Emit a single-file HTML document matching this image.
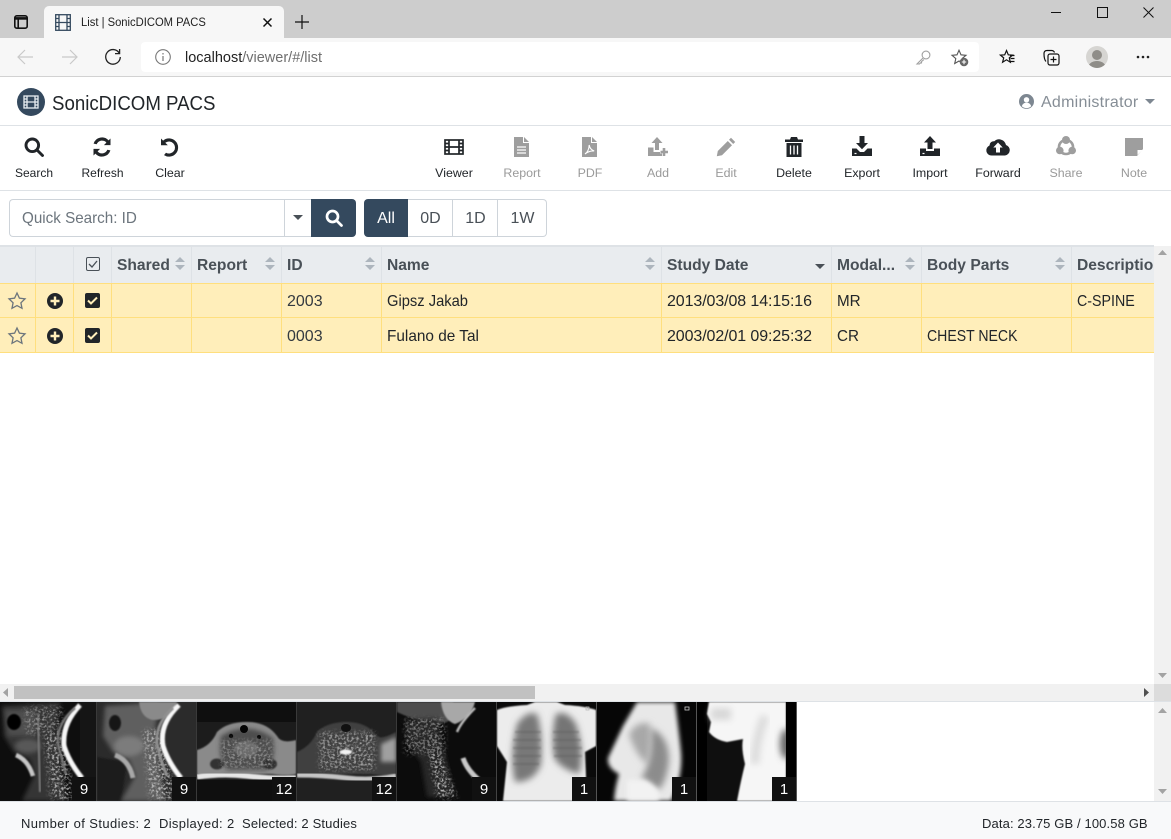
<!DOCTYPE html>
<html><head><meta charset="utf-8"><title>List | SonicDICOM PACS</title>
<style>
html,body{margin:0;padding:0;width:1171px;height:839px;overflow:hidden;background:#fff}
body{position:relative;font-family:"Liberation Sans",sans-serif;color:#212529}
.a{position:absolute}
.t{position:absolute;white-space:nowrap;line-height:1;transform-origin:0 0}
svg{position:absolute;overflow:visible}
.lb{position:absolute;top:166px;width:68px;text-align:center;font-size:12.4px;line-height:14px;color:#212529}
.dis{color:#9a9a9a}
.h{position:absolute;top:258px;font-size:15.6px;font-weight:bold;color:#495057;line-height:16px;white-space:nowrap}
.c{position:absolute;font-size:16px;line-height:16px;white-space:nowrap;color:#212529;transform-origin:0 0}
.v{position:absolute;width:1px;background:#dee2e6;top:247px;height:36px}
.w{position:absolute;width:1px;background:#ffdf7e;top:284px;height:68px}
.g{position:absolute;top:199px;height:36px;border:1px solid #ced4da;border-left:0;background:#fff;text-align:center;text-indent:1px;font-size:16px;line-height:38px;color:#495057}
.bd{position:absolute;top:777px;width:24px;height:24px;background:#111;color:#fff;font-size:15px;line-height:26px;text-align:center}
</style></head><body>

<!-- browser chrome -->
<div class="a" style="left:0;top:0;width:1171px;height:38px;background:#cdcdcd"></div>
<div class="a" style="left:44px;top:6px;width:240px;height:32px;background:#f7f7f7;border-radius:5px 5px 0 0"></div>
<div class="a" style="left:0;top:38px;width:1171px;height:38px;background:#f7f7f7"></div>
<div class="a" style="left:0;top:76px;width:1171px;height:1px;background:#d2d2d2"></div>
<div class="a" style="left:141px;top:42px;width:838px;height:30px;background:#fff;border-radius:4px"></div>

<svg style="left:14px;top:15px" width="14" height="14" fill="none" stroke="#111" stroke-width="1.6"><rect x=".8" y=".8" width="12.4" height="12.4" rx="2"/><path d="M.8 3.400h12.4" stroke-width="2.600"/><path d="M4.200 3v10"/></svg>
<svg style="left:55px;top:14px" width="16" height="17" fill="none" stroke="#34495e" stroke-width="1.3"><rect x=".7" y=".7" width="14.600" height="15.600"/><path d="M4 .7v15.600M12 .7v15.600M.7 4.500H4M.7 8.500H4M.7 12.500H4M12 4.500h3.300M12 8.500h3.300M12 12.500h3.300M4 8.500h8"/></svg>
<div class="t" style="left:81px;top:16px;font-size:12.200px;color:#222;transform:scaleX(.92)">List | SonicDICOM PACS</div>
<svg style="left:263px;top:18px" width="9" height="9" stroke="#111" stroke-width="1.500"><path d="M.5.500l8 8M8.500.500l-8 8"/></svg>
<svg style="left:295px;top:15px" width="14" height="14" stroke="#111" stroke-width="1.200"><path d="M7 0v14M0 7h14"/></svg>

<svg style="left:17px;top:49px" width="17" height="16" fill="none" stroke="#c9c9c9" stroke-width="1.200"><path d="M16 8H1M8 1L1 8l7 7"/></svg>
<svg style="left:61px;top:49px" width="17" height="16" fill="none" stroke="#c9c9c9" stroke-width="1.200"><path d="M1 8h15M9 1l7 7-7 7"/></svg>
<svg style="left:104px;top:48px" width="18" height="18" fill="none" stroke="#222" stroke-width="1.300"><path d="M15.200 5A7.300 7.300 0 1 0 16.300 9"/><path d="M15.600 1v4.600H11"/></svg>
<svg style="left:155px;top:49px" width="16" height="16" fill="none" stroke="#777" stroke-width="1.100"><circle cx="8" cy="8" r="7.300"/><path d="M8 7v5M8 4v1.500" stroke-width="1.200"/></svg>
<div class="t" style="left:185px;top:51px;font-size:14.500px;color:#6f6f6f"><span style="color:#222">localhost</span>/viewer/#/list</div>

<svg style="left:916px;top:50px" width="15" height="15" fill="none" stroke="#a0a0a0" stroke-width="1.100"><circle cx="10" cy="5" r="3.900"/><path d="M7 8L1 14h2.500l1-1.200 1 .1.100-1.400L8 9.500"/></svg>
<svg style="left:951px;top:49px" width="18" height="18"><path d="M8 1.200l2 4.600 5 .5-3.800 3.200 1.100 4.900L8 12l-4.300 2.500 1.100-4.900L1 6.300l5-.5z" fill="none" stroke="#555" stroke-width="1.100"/><circle cx="13" cy="13" r="4.300" fill="#666"/><path d="M13 10.800v4.400M10.800 13h4.400" stroke="#fff" stroke-width="1.100"/></svg>
<svg style="left:999px;top:49px" width="17" height="17" fill="none" stroke="#111" stroke-width="1.200"><path d="M7.500 1.500l1.800 4.300 4.200.3-3.200 2.800 1 4.300-3.800-2.400-3.900 2.400 1.100-4.300L1.400 6.100l4.300-.3z"/><path d="M11 6.500h4.500M11.500 9.500h4M11.500 12.500h4"/></svg>
<svg style="left:1043px;top:49px" width="17" height="17" fill="none" stroke="#111" stroke-width="1.200"><path d="M3 12.500C1.500 11 1 9 1 4.500 1 2.500 2 1.500 4 1.500h4.500c1.500 0 2.500.7 3 2"/><rect x="5" y="5" width="11" height="11" rx="2"/><path d="M10.500 7.500v6M7.500 10.500h6"/></svg>
<div class="a" style="left:1086px;top:46px;width:22px;height:22px;border-radius:50%;background:#d6d5d2;overflow:hidden"><div class="a" style="left:6px;top:4px;width:10px;height:10px;border-radius:50%;background:#8f8d88"></div><div class="a" style="left:2px;top:15px;width:18px;height:14px;border-radius:50%;background:#8f8d88"></div></div>
<svg style="left:1136px;top:55px" width="14" height="4" fill="#222"><circle cx="2" cy="2" r="1.300"/><circle cx="7" cy="2" r="1.300"/><circle cx="12" cy="2" r="1.300"/></svg>

<div class="a" style="left:1051px;top:12px;width:10px;height:1px;background:#111"></div>
<div class="a" style="left:1097px;top:7px;width:9px;height:9px;border:1px solid #111"></div>
<svg style="left:1143px;top:7px" width="11" height="11" stroke="#111" stroke-width="1"><path d="M.5.500l10 10M10.500.500l-10 10"/></svg>

<!-- app header -->
<svg style="left:17px;top:88px" width="28" height="28"><circle cx="14" cy="14" r="14" fill="#34495e"/><g fill="none" stroke="#e8edf2" stroke-width="1.300"><rect x="7" y="8" width="14" height="12"/><path d="M10 8v12M18 8v12M7 11h3M7 14h3M7 17h3M18 11h3M18 14h3M18 17h3M10 14h8"/></g></svg>
<div class="t" style="left:52px;top:94px;font-size:20.400px;color:#212529;transform:scaleX(.915)">SonicDICOM PACS</div>
<svg style="left:1019px;top:94px" width="15" height="15"><circle cx="7.500" cy="7.500" r="7.500" fill="#7d8791"/><circle cx="7.500" cy="5.800" r="2.700" fill="#fff"/><path d="M2.800 12.300c.8-2.600 2.600-3.500 4.700-3.500s3.900.9 4.700 3.500c-1.200 1.200-2.900 1.900-4.700 1.900s-3.500-.7-4.700-1.900z" fill="#fff"/></svg>
<div class="t" style="left:1041px;top:95px;font-size:16px;color:#868e96;letter-spacing:.25px">Administrator</div>
<svg style="left:1145px;top:99px" width="10" height="6" fill="#7d8791"><path d="M0 0h10L5 5z"/></svg>
<div class="a" style="left:0;top:125px;width:1171px;height:1px;background:#dee2e6"></div>

<!-- toolbar icons -->
<svg style="left:24px;top:137px" width="20" height="20" fill="none" stroke="#212529" stroke-width="2.900"><circle cx="8.300" cy="8.300" r="6.300"/><path d="M13 13l5.500 5.500" stroke-linecap="round"/></svg>
<svg style="left:92px;top:137px" width="20" height="20" fill="#212529"><path d="M18.500 1.500v6.600h-6.600l2.500-2.500A5.700 5.700 0 0 0 4.700 7.300L1.600 6.600A8.800 8.800 0 0 1 16.600 3.400z"/><path d="M1.500 18.500v-6.600h6.600l-2.500 2.500a5.700 5.700 0 0 0 9.700-1.700l3.100.7A8.800 8.800 0 0 1 3.400 16.600z"/></svg>
<svg style="left:160px;top:137px" width="20" height="20" fill="#212529"><path d="M1 1.500v6.800h6.800L5.300 5.800A6 6 0 1 1 6 15.700l-2 2.400A9.100 9.100 0 1 0 3.100 3.600z"/></svg>
<svg style="left:444px;top:139px" width="20" height="16" fill="none" stroke="#212529" stroke-width="1.700"><rect x="1" y="1" width="18" height="14"/><path d="M5 1v14M15 1v14M1 4.500h4M1 8h4M1 11.500h4M15 4.500h4M15 8h4M15 11.500h4M5 8h10"/></svg>
<svg style="left:514px;top:137px" width="15" height="20" fill="#9e9e9e"><path d="M0 0h9v6h6v14H0z"/><path d="M10 0l5 5h-5z"/><path d="M3 10h9M3 13h9M3 16h9" stroke="#fff" stroke-width="1.200"/></svg>
<svg style="left:582px;top:137px" width="15" height="20" fill="#9e9e9e"><path d="M0 0h9v6h6v14H0z"/><path d="M10 0l5 5h-5z"/><path d="M3 17c3-2 4-5 4.200-9 .5 3 2 5 5 6-3-.3-6 .5-9.200 3z" fill="none" stroke="#fff" stroke-width="1.100"/></svg>
<svg style="left:648px;top:137px" width="20" height="20" fill="#9e9e9e"><path d="M9 0l5.500 6h-3.500v7H7V6H3.500z"/><path d="M0 10.500h5.500V15H12v1.500H14V19H0z"/><path d="M16 11v8M12.500 15h7.500" stroke="#9e9e9e" stroke-width="2.600"/></svg>
<svg style="left:716px;top:137px" width="20" height="20" fill="#9e9e9e"><path d="M15 .8l4.200 4.200-2 2L13 2.800zM11.800 4l4.200 4.200L6 18.200l-5.200 1 1-5.200z"/></svg>
<svg style="left:785px;top:137px" width="18" height="20" fill="#212529"><path d="M6 0h6l1 2.500h5V5H0V2.500h5z"/><path d="M1.500 6h15v14h-15z"/><path d="M5.500 8.500v9M9 8.500v9M12.500 8.500v9" stroke="#fff" stroke-width="1.300"/></svg>
<svg style="left:852px;top:136px" width="20" height="20" fill="#212529"><path d="M7.500 0h5v7h3.500L10 13.300 4 7h3.500z"/><path d="M0 12.500h4.500L8 16h4l3.500-3.500H20V20H0z"/><path d="M2.500 17.500h2" stroke="#fff" stroke-width="1.200"/></svg>
<svg style="left:920px;top:136px" width="20" height="20" fill="#212529"><path d="M10 0l6 6.500h-3.500V13h-5V6.500H4z"/><path d="M0 12.500h6V15h8v-2.500h6V20H0z"/><path d="M2.500 17.500h2" stroke="#fff" stroke-width="1.200"/></svg>
<svg style="left:986px;top:137px" width="24" height="19" fill="#212529"><path d="M5.500 18.500A5.200 5.200 0 0 1 3.500 8.500 4.200 4.200 0 0 1 8.300 4.300 7 7 0 0 1 20 8a5.400 5.400 0 0 1-1 10.500z"/><path d="M12 5.500l4.700 5H14v5h-4v-5H7.300z" fill="#fff"/></svg>
<svg style="left:1056px;top:136px" width="20" height="20"><circle cx="10" cy="11" r="7" fill="none" stroke="#9e9e9e" stroke-width="2.600"/><g fill="#9e9e9e"><circle cx="10" cy="4" r="4"/><circle cx="3.800" cy="14.500" r="3.800"/><circle cx="16.200" cy="14.500" r="3.800"/></g></svg>
<svg style="left:1125px;top:138px" width="18" height="18" fill="#9e9e9e"><path d="M0 0h18v11l-6 7H0z"/><path d="M12.500 17v-5h5z" fill="#fff"/></svg>

<div class="lb" style="left:0;font-size:12px">Search</div>
<div class="lb" style="left:68.500px;font-size:12px">Refresh</div>
<div class="lb" style="left:136px">Clear</div>
<div class="lb" style="left:420px">Viewer</div>
<div class="lb dis" style="left:488px">Report</div>
<div class="lb dis" style="left:556px">PDF</div>
<div class="lb dis" style="left:624px">Add</div>
<div class="lb dis" style="left:692px">Edit</div>
<div class="lb" style="left:760px">Delete</div>
<div class="lb" style="left:828px">Export</div>
<div class="lb" style="left:896px">Import</div>
<div class="lb" style="left:964px">Forward</div>
<div class="lb dis" style="left:1032px">Share</div>
<div class="lb dis" style="left:1100px">Note</div>
<div class="a" style="left:0;top:190px;width:1171px;height:1px;background:#dee2e6"></div>

<!-- quick search -->
<div class="a" style="left:9px;top:199px;width:275px;height:36px;border:1px solid #ced4da;border-right:0;border-radius:4px 0 0 4px;background:#fff"></div>
<div class="t" style="left:22px;top:211px;font-size:16px;color:#6c757d;transform:scaleX(.95)">Quick Search: ID</div>
<div class="a" style="left:284px;top:199px;width:26px;height:36px;border:1px solid #ced4da;border-right:0;background:#fff"></div>
<svg style="left:293px;top:215px" width="10" height="5" fill="#495057"><path d="M0 0h10L5 5z"/></svg>
<div class="a" style="left:311px;top:199px;width:45px;height:38px;background:#34495e;border-radius:0 4px 4px 0"></div>
<svg style="left:325px;top:209px" width="18" height="18" fill="none" stroke="#fff" stroke-width="2.700"><circle cx="7.500" cy="7.500" r="5.500"/><path d="M11.800 11.800l4.700 4.700" stroke-linecap="round"/></svg>
<div class="a" style="left:364px;top:199px;width:44px;height:38px;background:#34495e;border-radius:4px 0 0 4px;color:#fff;text-align:center;font-size:16px;line-height:40px">All</div>
<div class="g" style="left:408px;width:44px">0D</div>
<div class="g" style="left:453px;width:44px">1D</div>
<div class="g" style="left:498px;width:48px;border-radius:0 4px 4px 0">1W</div>

<!-- table -->
<div class="a" style="left:0;top:245px;width:1154px;height:2px;background:#dee2e6"></div>
<div class="a" style="left:0;top:247px;width:1154px;height:36px;background:#e9ecef"></div>
<div class="a" style="left:0;top:283px;width:1154px;height:1px;background:#ffdf7e"></div>
<div class="a" style="left:0;top:284px;width:1154px;height:68px;background:#ffeeba"></div>
<div class="a" style="left:0;top:317px;width:1154px;height:1px;background:#ffdf7e"></div>
<div class="a" style="left:0;top:352px;width:1154px;height:1px;background:#ffdf7e"></div>

<div class="v" style="left:35px"></div><div class="v" style="left:73px"></div><div class="v" style="left:111px"></div><div class="v" style="left:191px"></div><div class="v" style="left:281px"></div><div class="v" style="left:381px"></div><div class="v" style="left:661px"></div><div class="v" style="left:831px"></div><div class="v" style="left:921px"></div><div class="v" style="left:1071px"></div>
<div class="w" style="left:35px"></div><div class="w" style="left:73px"></div><div class="w" style="left:111px"></div><div class="w" style="left:191px"></div><div class="w" style="left:281px"></div><div class="w" style="left:381px"></div><div class="w" style="left:661px"></div><div class="w" style="left:831px"></div><div class="w" style="left:921px"></div><div class="w" style="left:1071px"></div>

<svg style="left:86px;top:257px" width="14" height="14" fill="none" stroke="#495057" stroke-width="1"><rect x=".5" y=".5" width="13" height="13" rx="1.500"/><path d="M3 7l3 3 5-6" stroke-width="1.300"/></svg>
<div class="h" style="left:117px">Shared</div>
<div class="h" style="left:197px">Report</div>
<div class="h" style="left:287px">ID</div>
<div class="h" style="left:387px">Name</div>
<div class="h" style="left:667px">Study Date</div>
<div class="h" style="left:837px">Modal...</div>
<div class="h" style="left:927px">Body Parts</div>
<div class="h" style="left:1077px;width:77px;overflow:hidden">Description</div>

<svg style="left:175px;top:257px" width="10" height="13" fill="#adb5bd"><path d="M0 5L5 0l5 5zM0 8h10l-5 5z"/></svg>
<svg style="left:265px;top:257px" width="10" height="13" fill="#adb5bd"><path d="M0 5L5 0l5 5zM0 8h10l-5 5z"/></svg>
<svg style="left:365px;top:257px" width="10" height="13" fill="#adb5bd"><path d="M0 5L5 0l5 5zM0 8h10l-5 5z"/></svg>
<svg style="left:645px;top:257px" width="10" height="13" fill="#adb5bd"><path d="M0 5L5 0l5 5zM0 8h10l-5 5z"/></svg>
<svg style="left:815px;top:264px" width="10" height="5" fill="#495057"><path d="M0 0h10L5 5z"/></svg>
<svg style="left:905px;top:257px" width="10" height="13" fill="#adb5bd"><path d="M0 5L5 0l5 5zM0 8h10l-5 5z"/></svg>
<svg style="left:1055px;top:257px" width="10" height="13" fill="#adb5bd"><path d="M0 5L5 0l5 5zM0 8h10l-5 5z"/></svg>

<svg style="left:8px;top:292px" width="18" height="17" fill="none" stroke="#6c757d" stroke-width="1.300"><path d="M9 1l2.400 5.200 5.600.7-4.100 3.900 1.100 5.500L9 13.600l-5 2.700 1.100-5.500L1 6.900l5.600-.7z"/></svg>
<svg style="left:8px;top:327px" width="18" height="17" fill="none" stroke="#6c757d" stroke-width="1.300"><path d="M9 1l2.400 5.200 5.600.7-4.100 3.900 1.100 5.500L9 13.600l-5 2.700 1.100-5.500L1 6.900l5.600-.7z"/></svg>
<svg style="left:47px;top:293px" width="16" height="16"><circle cx="8" cy="8" r="8" fill="#212529"/><path d="M8 3.500v9M3.500 8h9" stroke="#ffeeba" stroke-width="2.400"/></svg>
<svg style="left:47px;top:328px" width="16" height="16"><circle cx="8" cy="8" r="8" fill="#212529"/><path d="M8 3.500v9M3.500 8h9" stroke="#ffeeba" stroke-width="2.400"/></svg>
<svg style="left:85px;top:293px" width="15" height="15"><rect width="15" height="15" rx="2" fill="#212529"/><path d="M3 7.500l3 3 6-6" fill="none" stroke="#ffeeba" stroke-width="2"/></svg>
<svg style="left:85px;top:328px" width="15" height="15"><rect width="15" height="15" rx="2" fill="#212529"/><path d="M3 7.500l3 3 6-6" fill="none" stroke="#ffeeba" stroke-width="2"/></svg>

<div class="c" style="left:287px;top:294px;color:#343a40">2003</div>
<div class="c" style="left:387px;top:294px;transform:scaleX(.92)">Gipsz Jakab</div>
<div class="c" style="left:667px;top:294px;letter-spacing:-.1px">2013/03/08 14:15:16</div>
<div class="c" style="left:837px;top:294px;transform:scaleX(.95)">MR</div>
<div class="c" style="left:1077px;top:294px;transform:scaleX(.89)">C-SPINE</div>
<div class="c" style="left:287px;top:329px;color:#343a40">0003</div>
<div class="c" style="left:387px;top:329px;transform:scaleX(.96)">Fulano de Tal</div>
<div class="c" style="left:667px;top:329px;letter-spacing:-.1px">2003/02/01 09:25:32</div>
<div class="c" style="left:837px;top:329px;transform:scaleX(.95)">CR</div>
<div class="c" style="left:927px;top:329px;transform:scaleX(.88)">CHEST NECK</div>

<!-- scrollbars -->
<div class="a" style="left:1154px;top:246px;width:17px;height:438px;background:#f1f1f1"></div>
<svg style="left:1158px;top:250px" width="9" height="5" fill="#a3a3a3"><path d="M0 5L4.500 0 9 5z"/></svg>
<svg style="left:1158px;top:673px" width="9" height="5" fill="#a3a3a3"><path d="M0 0l4.500 5L9 0z"/></svg>
<div class="a" style="left:0;top:684px;width:1154px;height:17px;background:#f1f1f1"></div>
<div class="a" style="left:1154px;top:684px;width:17px;height:17px;background:#dcdcdc"></div>
<div class="a" style="left:14px;top:686px;width:521px;height:13px;background:#c1c1c1"></div>
<svg style="left:3px;top:688px" width="5" height="9" fill="#a3a3a3"><path d="M5 0L0 4.500 5 9z"/></svg>
<svg style="left:1144px;top:688px" width="5" height="9" fill="#505050"><path d="M0 0l5 4.500L0 9z"/></svg>
<div class="a" style="left:0;top:701px;width:1171px;height:1px;background:#dee2e6"></div>
<div class="a" style="left:1154px;top:702px;width:17px;height:99px;background:#f1f1f1"></div>
<svg style="left:1158px;top:708px" width="9" height="5" fill="#a3a3a3"><path d="M0 5L4.500 0 9 5z"/></svg>
<svg style="left:1158px;top:789px" width="9" height="5" fill="#a3a3a3"><path d="M0 0l4.500 5L9 0z"/></svg>

<!-- thumbnails -->
<svg style="left:0;top:702px;overflow:hidden" width="797" height="99" viewBox="0 0 797 99">
<defs>
<filter id="b1" x="-30%" y="-30%" width="160%" height="160%"><feGaussianBlur stdDeviation=".7"/></filter>
<filter id="b2" x="-30%" y="-30%" width="160%" height="160%"><feGaussianBlur stdDeviation="2"/></filter>
<filter id="b4" x="-50%" y="-50%" width="200%" height="200%"><feGaussianBlur stdDeviation="3.500"/></filter>
<filter id="n" x="-20%" y="-20%" width="140%" height="140%"><feGaussianBlur in="SourceGraphic" stdDeviation="2.500" result="soft"/><feTurbulence type="fractalNoise" baseFrequency=".42" numOctaves="2" seed="11" result="tb"/><feColorMatrix in="tb" values="0 0 0 0 1 0 0 0 0 1 0 0 0 0 1 3.500 0 0 0 -1.550" result="al"/><feComposite in="soft" in2="al" operator="in"/></filter>
<clipPath id="c1"><rect width="96" height="99"/></clipPath>
<clipPath id="c2"><rect width="99" height="99"/></clipPath>
</defs>
<rect width="797" height="99" fill="#555"/>

<!-- T1 -->
<g clip-path="url(#c1)"><rect width="96" height="99" fill="#0e0e0e"/><rect x="80" width="16" height="99" fill="#151515"/>
<path d="M2 4L60 0 56 30 66 99H22L34 74 30 58 14 50 4 34z" fill="#353535" filter="url(#b2)"/>
<path d="M5 8H36V34H8z" fill="#4e4e4e" filter="url(#b2)"/>
<ellipse cx="14" cy="20" rx="7" ry="8" fill="#060606" filter="url(#b1)"/><ellipse cx="28" cy="44" rx="13" ry="7" fill="#585858" filter="url(#b2)"/>
<path d="M16 53Q28 58 33 74" fill="none" stroke="#c6c6c6" stroke-width="4.500" filter="url(#b1)"/>
<path d="M38 14L40 90" stroke="#7a7a7a" stroke-width="2" filter="url(#b1)"/>
<path d="M44 30L50 96 72 99V80L60 28z" fill="#a8a8a8" filter="url(#n)"/>
<path d="M24 5H62V22L45 32H26z" fill="#8a8a8a" filter="url(#n)"/>
<path d="M80 3Q62 22 64 44 69 60 82 76" fill="none" stroke="#f6f6f6" stroke-width="5" filter="url(#b1)"/>
<path d="M75 6Q56 22 58 42 62 58 66 72" fill="none" stroke="#777" stroke-width="2.500" filter="url(#b1)"/>
</g>
<!-- T2 -->
<g transform="translate(97)" clip-path="url(#c2)"><rect width="99" height="99" fill="#2b2b2b"/><path d="M0 55L30 60 24 99H0z" fill="#1a1a1a" filter="url(#b1)"/>
<path d="M8 4L62 0 58 30 68 99H24L38 74 32 58 16 50 6 34z" fill="#5e5e5e" filter="url(#b2)"/>
<ellipse cx="18" cy="21" rx="6" ry="8" fill="#121212" filter="url(#b1)"/><ellipse cx="32" cy="44" rx="15" ry="10" fill="#7c7c7c" filter="url(#b2)"/>
<path d="M42 0H80Q76 18 56 18 44 16 42 0z" fill="#8a8a8a" filter="url(#b1)"/>
<path d="M18 53Q32 58 36 76" fill="none" stroke="#a8a8a8" stroke-width="5" filter="url(#b1)"/>
<path d="M46 28L52 96 76 99V80L62 28z" fill="#b4b4b4" filter="url(#n)"/>
<path d="M82 3Q62 22 66 44 71 60 84 76" fill="none" stroke="#f8f8f8" stroke-width="5" filter="url(#b1)"/>
<path d="M76 6Q58 22 60 42 64 60 70 74" fill="none" stroke="#909090" stroke-width="3" filter="url(#b1)"/>
</g>
<!-- T3 -->
<g transform="translate(197)" clip-path="url(#c2)"><rect width="99" height="99" fill="#0f0f0f"/><rect y="20" width="99" height="58" fill="#1c1c1c"/>
<path d="M0 48Q14 44 20 30 30 20 50 20 70 20 80 34 84 42 99 38V72Q90 74 75 72H30Q12 74 0 72z" fill="#8a8a8a" filter="url(#b1)"/>
<path d="M24 34Q50 18 76 36 80 56 70 68H30Q20 56 24 34z" fill="#4d4d4d" filter="url(#b2)"/>
<ellipse cx="49" cy="47" rx="12" ry="8" fill="#6a6a6a" filter="url(#b1)"/><ellipse cx="20" cy="62" rx="7" ry="5.500" fill="#333" filter="url(#b1)"/><ellipse cx="73" cy="62" rx="7" ry="5.500" fill="#333" filter="url(#b1)"/>
<ellipse cx="47" cy="27" rx="4" ry="4" fill="#050505"/><circle cx="34" cy="34" r="2.200" fill="#0a0a0a"/><circle cx="62" cy="35" r="2" fill="#0a0a0a"/>
<path d="M24 38H76V66H24z" fill="#8c8c8c" filter="url(#n)"/>
<path d="M0 75Q25 71 50 74T99 76" fill="none" stroke="#e6e6e6" stroke-width="5.500" filter="url(#b1)"/></g>
<!-- T4 -->
<g transform="translate(297)" clip-path="url(#c2)"><rect width="99" height="99" fill="#202020"/>
<path d="M0 50Q14 44 20 30 30 20 50 20 70 20 80 34 84 38 99 30V72Q90 74 75 72H30Q12 74 0 72z" fill="#414141" filter="url(#b1)"/>
<path d="M84 42L99 35V60H84z" fill="#a0a0a0" filter="url(#b2)"/>
<path d="M22 30H78V68H22z" fill="#9c9c9c" filter="url(#n)"/>
<ellipse cx="49" cy="26" rx="5" ry="4" fill="#111"/>
<ellipse cx="49" cy="50" rx="6" ry="2.600" fill="#f2f2f2" filter="url(#b1)"/>
<path d="M0 73Q25 73 50 76T99 74" fill="none" stroke="#c5c5c5" stroke-width="5" filter="url(#b1)"/></g>
<!-- T5 -->
<g transform="translate(397)" clip-path="url(#c2)"><rect width="99" height="99" fill="#0c0c0c"/>
<path d="M0 0H56Q60 14 50 20 30 24 0 10z" fill="#4d4d4d" filter="url(#b1)"/>
<path d="M44 0H78Q74 16 58 22 46 18 44 0z" fill="#a8a8a8" filter="url(#b1)"/>
<path d="M8 18L40 16 44 36 58 95H30L24 60 10 40z" fill="#262626" filter="url(#b2)"/>
<path d="M36 30L60 96H40L30 44z" fill="#b4b4b4" filter="url(#n)"/>
<path d="M8 16H48V52H8z" fill="#7c7c7c" filter="url(#n)"/>
<path d="M78 6Q64 20 60 30" fill="none" stroke="#bbb" stroke-width="2.500" filter="url(#b1)"/>
<path d="M66 56Q70 68 82 78" fill="none" stroke="#c8c8c8" stroke-width="5" filter="url(#b1)"/></g>
<!-- T6 -->
<g transform="translate(497)" clip-path="url(#c2)"><rect width="99" height="99" fill="#0a0a0a"/>
<path d="M0 8Q10 4 30 3L38 0H60L68 3Q88 4 99 8V44L88 50 90 99H6L10 60 0 44z" fill="#ececec" filter="url(#b1)"/>
<path d="M20 22Q30 8 40 12 46 30 44 62 38 80 18 80 12 55 20 22z" fill="#787878" filter="url(#b4)"/>
<path d="M79 22Q70 8 59 12 54 30 57 55 62 66 82 72 88 50 79 22z" fill="#747474" filter="url(#b4)"/>
<path d="M18 30H44M16 38H44M16 46H44M16 54H44M16 62H42M56 30H82M56 38H84M56 46H85M57 54H85" stroke="#5c5c5c" stroke-width="2.200" opacity=".35" filter="url(#b1)"/>
<rect x="89" y="5" width="3" height="3" fill="none" stroke="#bbb" stroke-width=".8"/></g>
<!-- T7 -->
<g transform="translate(597)" clip-path="url(#c2)"><rect width="99" height="99" fill="#060606"/>
<path d="M40 0H78Q82 30 84 50 86 75 74 99H17Q18 85 22 72 10 66 11 56L26 24z" fill="#e8e8e8" filter="url(#b2)"/>
<path d="M32 32Q40 18 53 22 55 44 50 62 38 52 32 32z" fill="#a8a8a8" filter="url(#b4)"/>
<path d="M54 26Q72 34 72 58 70 78 62 88 50 78 44 76 56 60 54 26z" fill="#8c8c8c" filter="url(#b4)"/>
<path d="M44 78Q52 78 62 90V99H30V78z" fill="#f2f2f2" filter="url(#b2)"/><rect x="88" y="5" width="4" height="3" fill="none" stroke="#ccc" stroke-width=".8"/></g>
<!-- T8 -->
<g transform="translate(697)" clip-path="url(#c2)"><rect width="99" height="99" fill="#000"/><rect x="10" width="79" height="99" fill="#0f0f0f"/>
<path d="M12 0H89V99H40Q44 78 48 62 44 46 46 37L30 40Q18 38 12 30L14 20 10 12z" fill="#f6f6f6" filter="url(#b1)"/>
<ellipse cx="89" cy="42" rx="6" ry="15" fill="#666" filter="url(#b4)"/>
<path d="M68 14Q58 40 58 62" fill="none" stroke="#dcdcdc" stroke-width="9" filter="url(#b4)"/>
<path d="M14 6H34V18H14z" fill="#d8d8d8" filter="url(#b4)"/>
<rect x="89" width="10" height="99" fill="#000"/></g>
</svg>
<div class="a" style="left:96px;top:702px;width:1px;height:99px;background:#3a3a3a"></div>
<div class="a" style="left:196px;top:702px;width:1px;height:99px;background:#3a3a3a"></div>
<div class="a" style="left:296px;top:702px;width:1px;height:99px;background:#3a3a3a"></div>
<div class="a" style="left:396px;top:702px;width:1px;height:99px;background:#3a3a3a"></div>
<div class="a" style="left:496px;top:702px;width:1px;height:99px;background:#444"></div>
<div class="a" style="left:596px;top:702px;width:1px;height:99px;background:#555"></div>
<div class="a" style="left:696px;top:702px;width:1px;height:99px;background:#555"></div>
<div class="bd" style="left:72px">9</div><div class="bd" style="left:172px">9</div><div class="bd" style="left:272px">12</div><div class="bd" style="left:372px">12</div><div class="bd" style="left:472px">9</div><div class="bd" style="left:572px">1</div><div class="bd" style="left:672px">1</div><div class="bd" style="left:772px">1</div>

<!-- status bar -->
<div class="a" style="left:0;top:801px;width:1171px;height:38px;background:#f8f9fa;box-shadow:inset 0 1px 0 #dee2e6"></div>
<div class="t" style="left:21px;top:817px;font-size:13px;color:#212529;letter-spacing:.4px">Number of Studies: 2</div>
<div class="t" style="left:159px;top:817px;font-size:13px;color:#212529;letter-spacing:.33px">Displayed: 2</div>
<div class="t" style="left:242px;top:817px;font-size:13px;color:#212529;letter-spacing:.16px">Selected: 2 Studies</div>
<div class="t" style="left:982px;top:817px;font-size:13px;color:#212529;letter-spacing:.12px">Data: 23.75 GB / 100.58 GB</div>
</body></html>
